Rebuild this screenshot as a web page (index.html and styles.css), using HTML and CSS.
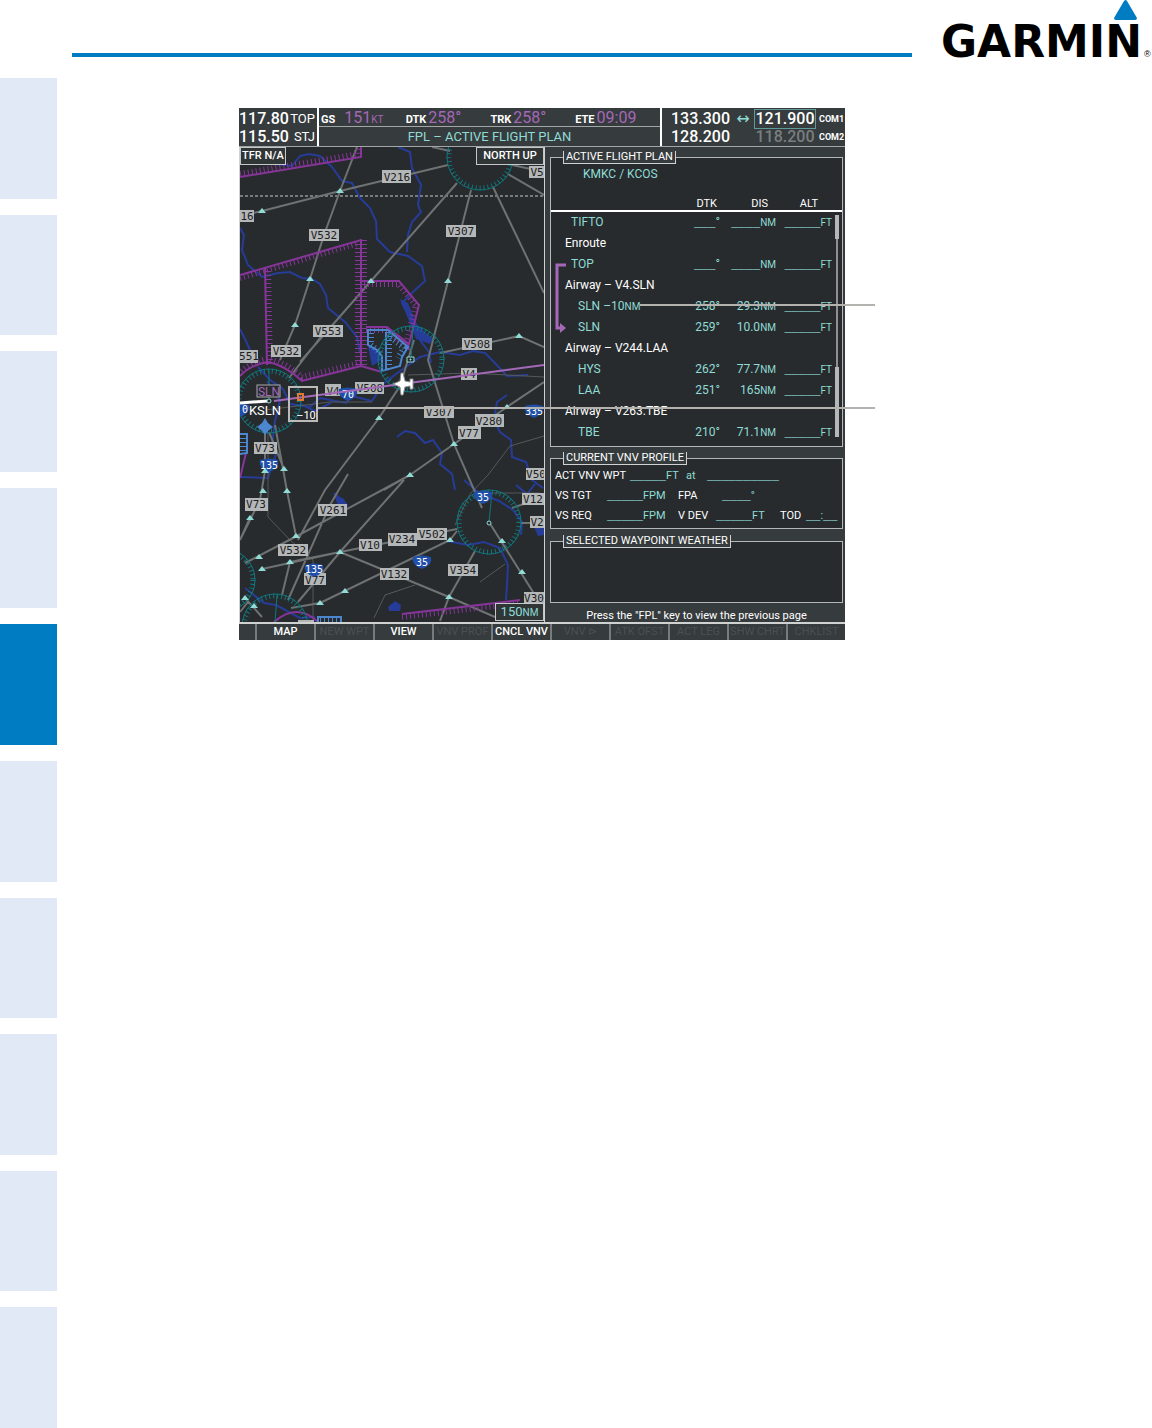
FILE: index.html
```html
<!DOCTYPE html>
<html lang="en">
<head>
<meta charset="utf-8">
<meta name="viewport" content="width=device-width, initial-scale=1">
<title>Active Flight Plan</title>
<link rel="stylesheet" href="styles.css">
</head>
<body>
<div class="page">
  <nav class="tabs" aria-label="Sections">
    <span class="tab"></span><span class="tab"></span><span class="tab"></span><span class="tab"></span>
    <span class="tab current"></span>
    <span class="tab"></span><span class="tab"></span><span class="tab"></span><span class="tab"></span><span class="tab"></span>
  </nav>
  <div class="content">
    <header class="masthead">
      <div class="rule"></div>
      <svg class="logo" viewBox="0 0 212 60" role="img" aria-label="Garmin">
        <path d="M187 1Q186 -1 184 1L174 18Q174 20 176 20H195Q197 20 197 18Z" fill="#007cc3"/>
        <text x="1" y="57" class="wordmark">GARMIN</text>
        <text x="204" y="57" class="reg">®</text>
      </svg>
    </header>
    <main class="main">
      <div class="display">
        <div class="status">
          <div class="nav-freq">
            <div class="line"><span>117.80</span><small>TOP</small></div>
            <div class="line"><span>115.50</span><small>STJ</small></div>
          </div>
          <div class="center">
            <div class="readouts">
              <div class="gs"><b>GS</b><span>151<small>KT</small></span></div>
              <div><b>DTK</b><span>258°</span></div>
              <div><b>TRK</b><span>258°</span></div>
              <div><b>ETE</b><span>09:09</span></div>
            </div>
            <div class="title">FPL – ACTIVE FLIGHT PLAN</div>
          </div>
          <div class="com-freq">
            <span>133.300</span><i>↔</i><span class="selected">121.900</span><b>COM1</b>
            <span>128.200</span><i></i><span class="idle">118.200</span><b>COM2</b>
          </div>
        </div>

        <div class="body">
          <div class="map">
            <svg viewBox="240 147 304 475" preserveAspectRatio="xMidYMid slice" role="img" aria-label="Navigation map">
              <defs>
                <path id="t" d="M0 -3L4 2H-4Z" fill="#8fdcd6"/>
                <path id="shield" d="M-9 -5Q0 -8 9 -5Q11 3 0 7Q-11 3 -9 -5Z" fill="#1f4fa8"/>
              </defs>
              <!-- rivers and lakes -->
              <g class="water">
                <path d="M275 164L292 166L300 156L309 154L320 156L332 167L342 181L352 183L360 198L370 208L376 221L377 239L390 252L408 256L422 266L425 281L414 291L402 303L408 315L416 327L420 340L429 352L431 363"/>
                <path d="M398 147L410 152L412 168L421 185L418 205L421 212L412 222L408 235L407 252"/>
                <path d="M240 228L244 235L242 250L248 265L262 277L278 273L290 272L302 278L312 279L320 284L326 295L328 308L345 322L357 337L360 352"/>
                <path d="M240 329L245 339L250 350M258 367L270 380L283 389L290 404L310 407L320 398L346 403L352 396L372 401L383 384L396 374L420 357L440 352L460 355L473 351L485 353L493 361L507 376L528 375M300 404L315 411L331 403M267 381L280 401L275 421L272 445L276 454L268 478L240 477"/>
                <path d="M397 437L405 431L415 433L425 443L433 440L442 453L440 464L452 474L455 490M507 395L497 402L494 420L500 432L511 440L512 457L526 462L532 480L543 488M464 480L479 493L499 501L513 510L522 522L521 535M447 541L468 545L484 542L500 548L508 565L507 585L506 600M245 588L264 603L276 605L300 618L315 617M334 493L347 505L340 515M516 485L527 494L535 484"/>
                <path d="M334 494L344 499L348 507L338 506ZM388 607L395 601L401 605L400 611L389 611ZM400 299L408 303L416 323L424 331L433 339L430 344L416 339L409 321ZM533 525L544 520V535L538 536ZM368 346L376 350L382 360L372 366Z" class="lake"/>
              </g>
              <path d="M240 196H544" stroke="#c9cbcb" stroke-dasharray="3 2"/>
              <!-- airways -->
              <path class="road" d="M268 433V517L290 540L313 560V620M544 436L510 446L488 475L470 494L455 525M408 375L440 374L470 373L544 377M415 585L385 595L374 618M265 410L330 402H372M505 564L480 582M489 493H540"/>
              <g class="airway">
                <path d="M240 216L262 211L340 191L448 165M357 147L340 191L324 235L310 279L295 325L280 360M432 147L450 151M457 183L371 281L300 362M471 190L448 281L428 360L454 444L482 508M493 187L544 293M508 174L544 195M512 165L540 171M440 353L519 336L544 347M414 340L400 386L379 418L325 490L298 540M348 474L330 505L288 600M544 382L507 407L454 444L410 475L384 490M410 475L297 536L245 563M404 480L340 552L298 602M262 569L340 552L457 529M290 562L340 552M340 552L449 597L495 617M320 603L450 540L457 531M291 608L320 603M475 551L449 597L440 621M489 522L538 600M265 430V471L260 500L240 540M275 425L287 491L296 536M269 432L284 469M250 518L240 540M290 562L282 595M544 497L512 508M521 523H538M244 597L262 617M240 612L248 602M289 378L330 325"/>
              </g>
              <!-- special use airspace -->
              <g class="area">
                <path d="M240 177L361 157V147M240 275L361 240V366M265 268L267 365M361 281H399L419 305L409 344L395 333M361 366L302 381Q285 365 268 362Q250 365 240 376M361 366L382 372M366 327H387L408 344L409 350M402 614L520 600M240 478L246 453"/>
                <path class="teeth" d="M240 174L358 154V147M240 278L358 243V366M268 271L270 365M364 284H398L416 305L406 344M364 240V366M361 363L302 377Q285 362 268 359Q250 362 240 373M366 330H387L404 344M402 617L520 603"/>
                <path d="M274 622Q297 602 318 622"/>
              </g>
              <g class="area blue">
                <path d="M368 330V345L377 350L382 356V371L400 366L402 357L408 347L388 330ZM386 332V370M240 434H247V453L240 454M318 622V617H341V622"/>
                <path class="teeth" d="M371 333V345L381 353M388 335L404 348L398 358M389 332V370M243 434V454M320 619H341"/>
              </g>
              <!-- compass roses -->
              <g class="rose">
                <circle cx="480" cy="157" r="33"/><circle cx="411" cy="359" r="33"/><circle cx="269" cy="401" r="32"/><circle cx="489" cy="522" r="32"/><circle cx="224" cy="580" r="31"/><circle cx="275" cy="627" r="33"/>
                <path d="M411 359L413 328M269 401V370M489 522L492 492M275 622L277 595"/>
              </g>
              <g class="rose ticks">
                <circle cx="480" cy="157" r="31"/><circle cx="411" cy="359" r="31"/><circle cx="269" cy="401" r="30"/><circle cx="489" cy="522" r="30"/><circle cx="224" cy="580" r="29"/><circle cx="275" cy="627" r="31"/>
              </g>
              <!-- airway names -->
              <path class="plates" d="M382 170h29v13h-29zM529 166h20v12h-20zM240 210h14v12h-14zM309 229h30v12h-30zM446 225h30v12h-30zM313 325h30v12h-30zM271 345h30v12h-30zM240 350h18v13h-18zM462 338h30v12h-30zM325 384h16v12h-16zM355 382h29v12h-29zM461 368h16v12h-16zM424 406h30v12h-30zM475 414h29v13h-29zM458 426h23v13h-23zM254 442h23v12h-23zM245 498h23v13h-23zM318 504h29v12h-29zM278 544h30v12h-30zM304 573h22v12h-22zM359 539h23v12h-23zM388 533h29v13h-29zM417 528h30v12h-30zM380 568h29v12h-29zM448 564h30v12h-30zM522 493h24v12h-24zM530 516h16v12h-16zM526 468h20v12h-20zM524 592h20v12h-20zM298 620h16v4h-16z"/>
              <g class="names">
                <text x="397" y="181">V216</text><text x="537" y="176">V5</text><text x="247" y="220">16</text><text x="324" y="239">V532</text><text x="461" y="235">V307</text><text x="328" y="335">V553</text><text x="286" y="355">V532</text><text x="249" y="360">551</text><text x="477" y="348">V508</text><text x="333" y="395">V4</text><text x="370" y="392">V508</text><text x="469" y="378">V4</text><text x="439" y="416">V307</text><text x="489" y="425">V280</text><text x="469" y="437">V77</text><text x="265" y="452">V73</text><text x="256" y="508">V73</text><text x="333" y="514">V261</text><text x="293" y="554">V532</text><text x="315" y="584">V77</text><text x="370" y="549">V10</text><text x="402" y="543">V234</text><text x="432" y="538">V502</text><text x="394" y="578">V132</text><text x="463" y="574">V354</text><text x="533" y="503">V12</text><text x="537" y="526">V2</text><text x="536" y="478">V50</text><text x="534" y="602">V30</text>
              </g>
              <g class="shields">
                <use href="#shield" x="269" y="465"/><use href="#shield" x="483" y="497"/><use href="#shield" x="422" y="562"/><use href="#shield" x="314" y="570"/><use href="#shield" x="534" y="411"/><use href="#shield" x="240" y="410"/><use href="#shield" x="348" y="394"/>
                <text x="269" y="469">135</text><text x="483" y="501">35</text><text x="422" y="566">35</text><text x="314" y="573">135</text><text x="534" y="415">335</text><text x="245" y="413">0</text><text x="348" y="398">70</text>
              </g>
              <g>
                <use href="#t" x="340" y="191"/><use href="#t" x="262" y="211"/><use href="#t" x="310" y="279"/><use href="#t" x="295" y="325"/><use href="#t" x="371" y="281"/><use href="#t" x="448" y="281"/><use href="#t" x="519" y="336"/><use href="#t" x="379" y="418"/><use href="#t" x="410" y="475"/><use href="#t" x="454" y="444"/><use href="#t" x="507" y="407"/><use href="#t" x="284" y="469"/><use href="#t" x="265" y="471"/><use href="#t" x="263" y="491"/><use href="#t" x="287" y="491"/><use href="#t" x="250" y="518"/><use href="#t" x="296" y="536"/><use href="#t" x="259" y="557"/><use href="#t" x="262" y="569"/><use href="#t" x="290" y="562"/><use href="#t" x="340" y="552"/><use href="#t" x="450" y="540"/><use href="#t" x="502" y="541"/><use href="#t" x="522" y="572"/><use href="#t" x="449" y="597"/><use href="#t" x="345" y="591"/><use href="#t" x="320" y="603"/><use href="#t" x="245" y="598"/><use href="#t" x="254" y="606"/>
              </g>
              <!-- active route -->
              <path d="M274 401L544 365" stroke="#a468b8" stroke-width="2"/>
              <path d="M240 403L268 401" stroke="#fff" stroke-width="3"/>
              <path d="M257 427L262 423L265 418L268 423L273 427L268 431L265 435L262 431Z" fill="#4c86cf"/>
              <circle cx="269" cy="401" r="2" fill="#272b2d" stroke="#8fdcd6"/><circle cx="489" cy="523" r="2" fill="#272b2d" stroke="#8fdcd6"/>
              <path d="M407 357h7v5h-7zM410 359h1v1h-1z" fill="#272b2d" stroke="#8fdcd6"/>
              <path d="M393 384L400 381L401 373H403L405 381L410 382V379H413V389H410V386L405 387L403 395H401L400 387Z" fill="#fff" stroke="#8d9496"/>
              <rect x="257" y="385" width="23" height="12" fill="#272b2d" stroke="#aaa"/>
              <text x="269" y="396" class="ident">SLN</text><text x="265" y="415" class="airport">KSLN</text>
              <rect x="298" y="394" width="5" height="6" fill="none" stroke="#e6772e" stroke-width="2"/>
              <rect x="289" y="387" width="28" height="34" fill="none" stroke="#bdbbb7" stroke-width="2"/>
              <text x="306" y="419" class="offset">–10</text>
            </svg>
            <span class="map-tag tfr">TFR N/A</span>
            <span class="map-tag north">NORTH UP</span>
            <span class="map-tag range">150<small>NM</small></span>
          </div>

          <div class="panel">
            <fieldset class="box plan">
              <legend>ACTIVE FLIGHT PLAN</legend>
              <div class="route">KMKC / KCOS</div>
              <table>
                <thead><tr><th></th><th>DTK</th><th>DIS</th><th>ALT</th><th></th></tr></thead>
                <tbody>
                  <tr><td class="fix">TIFTO</td><td><u>___</u>°</td><td><u>____</u><small>NM</small></td><td><u>_____</u><small>FT</small></td><td rowspan="11" class="scroll"><div></div></td></tr>
                  <tr class="group"><td colspan="4">Enroute</td></tr>
                  <tr><td class="fix">TOP</td><td><u>___</u>°</td><td><u>____</u><small>NM</small></td><td><u>_____</u><small>FT</small></td></tr>
                  <tr class="group"><td colspan="4">Airway – V4.SLN</td></tr>
                  <tr><td class="fix leg">SLN –10<small>NM</small></td><td>258°</td><td>29.3<small>NM</small></td><td><u>_____</u><small>FT</small></td></tr>
                  <tr><td class="fix leg">SLN</td><td>259°</td><td>10.0<small>NM</small></td><td><u>_____</u><small>FT</small></td></tr>
                  <tr class="group"><td colspan="4">Airway – V244.LAA</td></tr>
                  <tr><td class="fix leg">HYS</td><td>262°</td><td>77.7<small>NM</small></td><td><u>_____</u><small>FT</small></td></tr>
                  <tr><td class="fix leg">LAA</td><td>251°</td><td>165<small>NM</small></td><td><u>_____</u><small>FT</small></td></tr>
                  <tr class="group"><td colspan="4">Airway – V263.TBE</td></tr>
                  <tr><td class="fix leg">TBE</td><td>210°</td><td>71.1<small>NM</small></td><td><u>_____</u><small>FT</small></td></tr>
                </tbody>
              </table>
              <svg class="leg-arrow" viewBox="0 0 12 70" aria-hidden="true"><path d="M11 2H2V65H6" fill="none" stroke="#a468b8" stroke-width="3"/><path d="M5 60L11 65L5 70Z" fill="#a468b8"/></svg>
            </fieldset>
            <fieldset class="box vnv">
              <legend>CURRENT VNV PROFILE</legend>
              <div class="vnv-top"><span>ACT VNV WPT</span><em><u>_____</u>FT</em><em>at</em><em><u>__________</u></em></div>
              <div class="vnv-grid">
                <span>VS TGT</span><em><u>_____</u>FPM</em><span>FPA</span><em class="fpa"><u>____</u>°</em><span></span><em></em>
                <span>VS REQ</span><em><u>_____</u>FPM</em><span>V DEV</span><em><u>_____</u>FT</em><span>TOD</span><em><u>__</u>:<u>__</u></em>
              </div>
            </fieldset>
            <fieldset class="box weather"><legend>SELECTED WAYPOINT WEATHER</legend></fieldset>
            <p class="hint">Press the "FPL" key to view the previous page</p>
          </div>
        </div>

        <div class="softkeys">
          <span></span>
          <button>MAP</button><button disabled>NEW WPT</button><button>VIEW</button><button disabled>VNV PROF</button><button>CNCL VNV</button><button disabled>VNV ⊳</button><button disabled>ATK OFST</button><button disabled>ACT LEG</button><button disabled>SHW CHRT</button><button disabled>CHKLIST</button>
        </div>
        <div class="callout first"></div>
        <div class="callout second"></div>
      </div>
    </main>
  </div>
</div>
</body>
</html>
```
FILE: styles.css
```css
* { box-sizing: border-box; }
body { margin: 0; background: #fff; }
.page { display: flex; min-height: 100vh; }
.tabs { flex: 0 0 57px; display: flex; flex-direction: column; gap: 16px; padding-top: 78px; }
.tab { flex: 1; background: #e1e9f6; }
.tab.current { background: #007cc3; }
.content { flex: 1; min-width: 0; }

.masthead { display: flex; align-items: flex-start; gap: 28px; padding-left: 15px; height: 60px; }
.rule { flex: 1; height: 4px; margin-top: 53px; background: #007cc3; }
.logo { width: 212px; height: 60px; overflow: visible; }
.wordmark { font: bold 44px "DejaVu Sans", sans-serif; }
.reg { font: 9px "Liberation Sans", sans-serif; }

.main { padding: 48px 16px 0 182px; }
.display {
  position: relative; max-width: 606px; background: #363b3d; color: #fff;
  font: 12px/16px Roboto, sans-serif;
}
small { font-size: 10px; line-height: 0; }
u { font: bold 12px/0 "Liberation Mono", monospace; text-decoration: none; }
em { font-style: normal; }

.status { display: grid; grid-template-columns: 78px 1fr 183px; height: 39px; border-bottom: 1px solid #a3a6a6; font-size: 16px; }
.nav-freq, .com-freq { line-height: 18px; padding-top: 2px; font-weight: 500; }
.nav-freq .line { display: flex; justify-content: space-between; padding-right: 2px; }
.nav-freq small { font-size: 13px; line-height: 18px; font-weight: 400; }
.center { border: solid #fff; border-width: 0 2px; }
.readouts { display: grid; grid-template-columns: repeat(4, 1fr); height: 19px; line-height: 19px; border-bottom: 1px solid #a3a6a6; padding-left: 2px; }
.readouts span { color: #a468b8; margin-left: 2px; }
.readouts .gs span { margin-left: 9px; }
.readouts b { font-size: 11px; }
.title { text-align: center; color: #8fdcd6; font-size: 13px; line-height: 19px; }
.com-freq { display: grid; grid-template-columns: 60px 1fr 60px 30px; padding-left: 9px; }
.com-freq i { font: 16px/18px "DejaVu Sans", sans-serif; color: #8fdcd6; text-align: center; }
.com-freq b { padding-left: 4px; font-size: 9px; }
.com-freq span:nth-of-type(even) { text-align: center; }
.com-freq .selected { outline: 1px solid #5f9a99; }
.com-freq .idle { color: #7a7e80; }

.body { display: grid; grid-template-columns: 306px 1fr; }
.map { position: relative; background: #272b2d; border: solid #d0d2d2; border-width: 0 1px; height: 475px; }
.map svg { display: block; width: 100%; height: 100%; fill: none; stroke-width: 1; }
.water { stroke: #263c98; stroke-width: 2; }
.lake { fill: #263c98; stroke: none; }
.road { stroke: #55595a; }
.airway { stroke: #6f7272; stroke-width: 2; }
.area { stroke: #87359a; stroke-width: 2; }
.area.blue { stroke: #4c86cf; }
.area .teeth { stroke-width: 6; stroke-dasharray: 1 3; }
.rose { stroke: #11767c; }
.rose.ticks { stroke-width: 5; stroke-dasharray: 1 3; }
.plates { fill: #b4b7b8; }
.names, .shields { text-anchor: middle; font: 11px "DejaVu Sans Mono", monospace; }
.names { fill: #1d2021; }
.shields { fill: #fff; font-size: 10px; }
.ident, .airport, .offset { text-anchor: middle; font-size: 12px; fill: #fff; }
.ident { fill: #a468b8; }
.airport { font-size: 13px; }
.offset { font-size: 11px; }
.map-tag { position: absolute; border: 1px solid #c5c8c8; background: #303536; line-height: 16px; text-align: center; font-weight: 500; font-size: 11px; white-space: nowrap; }
.tfr { left: 0; top: 0; width: 46px; }
.north { right: 0; top: 0; width: 68px; }
.range { right: 0; bottom: 1px; width: 49px; color: #8fdcd6; font-size: 13px; font-weight: 400; }

.panel { padding: 4px 2px 0 5px; height: 475px; }
.box { margin: 0; padding: 0; min-width: 0; border: 1px solid #b4b7b8; background: #272b2d; position: relative; }
.box legend { margin-left: 12px; padding: 0 2px; height: 13px; font-size: 11px; line-height: 12px; background: #363b3d; border: solid #d0d2d2; border-width: 0 1px 1px; }
.plan { height: 296px; }
.route { padding-left: 32px; line-height: 20px; color: #8fdcd6; }
.plan table { width: 100%; border-spacing: 0; table-layout: fixed; color: #8fdcd6; }
.plan th { height: 28px; padding: 0 8px 0 0; border-bottom: 2px solid #fff; font: 11px/13px Roboto, sans-serif; vertical-align: bottom; text-align: right; color: #fff; }
.plan th:nth-child(2) { width: 60px; padding-right: 3px; }
.plan th:nth-child(3) { width: 56px; }
.plan th:nth-child(4) { width: 56px; padding-right: 14px; }
.plan th:nth-child(5) { width: 10px; padding: 0; }
.plan td { height: 21px; padding: 0 0 1px; text-align: right; white-space: nowrap; }
.plan .fix { text-align: left; padding-left: 20px; }
.plan .fix.leg { padding-left: 27px; }
.plan .group td { text-align: left; padding-left: 14px; color: #fff; }
.plan td.scroll { vertical-align: top; padding: 3px 3px 0; }
.scroll div {
  height: 222px;
  background:
    linear-gradient(#b4b7b8, #b4b7b8) 0 0 / 4px 24px no-repeat,
    linear-gradient(#b4b7b8, #b4b7b8) 0 100% / 4px 70px no-repeat,
    linear-gradient(#8d9192, #8d9192) 50% 0 / 2px 100% no-repeat;
}
.leg-arrow { position: absolute; left: 4px; top: 99px; width: 12px; height: 70px; }
.vnv { height: 77px; margin-top: 5px; font-size: 11px; }
.vnv-top, .vnv-grid { padding-left: 4px; }
.vnv em { color: #8fdcd6; }
.vnv-top { display: grid; grid-template-columns: 75px 56px 21px 1fr; line-height: 21px; white-space: nowrap; }
.vnv-grid { display: grid; grid-template-columns: 52px 71px 38px 64px 26px 1fr; line-height: 20px; white-space: nowrap; }
.vnv-grid .fpa { padding-left: 6px; }
.weather { height: 68px; margin-top: 6px; }
.hint { margin: 5px 0 0; text-align: center; font-size: 11px; line-height: 16px; }

.softkeys { display: grid; grid-template-columns: 16px repeat(10, 1fr); height: 18px; border-top: 2px solid #d0d2d2; }
.softkeys button { min-width: 0; padding: 0; border: 0; border-left: 2px solid #777b7c; background: #363b3d; color: #fff; font: 500 11px/16px Roboto, sans-serif; white-space: nowrap; overflow: hidden; }
.softkeys button:disabled { color: #4b5052; font-weight: 400; }

.callout { position: absolute; height: 2px; right: -30px; background: #b4b2ae; }
.first { top: 196px; width: 235px; }
.second { top: 299px; width: 557px; }
```
